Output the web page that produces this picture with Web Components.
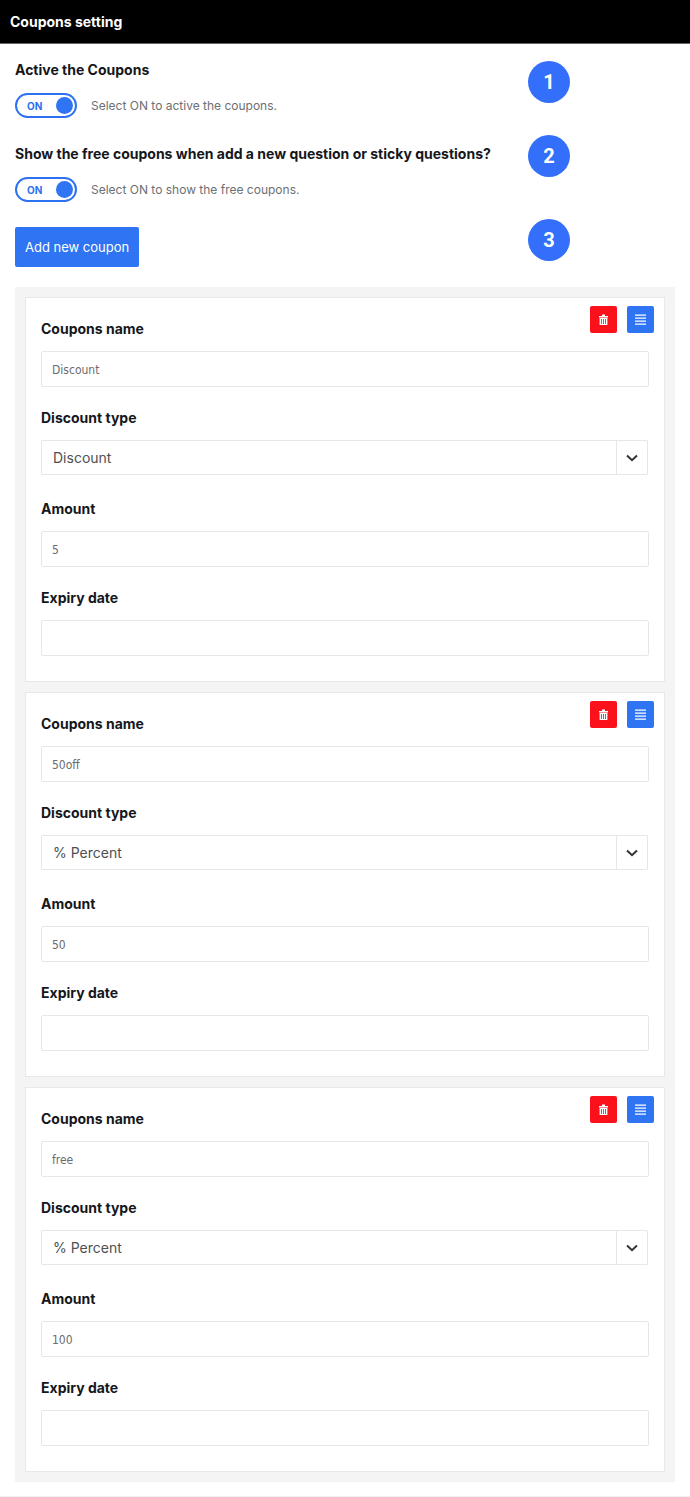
<!DOCTYPE html>
<html lang="en">
<head>
<meta charset="utf-8">
<meta name="viewport" content="width=device-width, initial-scale=1">
<title>Coupons setting</title>
<style>
  body {
    margin: 0;
    background: #fff;
    color: #15171c;
    font-family: Inter, "Liberation Sans", sans-serif;
    font-size: 14px;
    line-height: 20px;
  }
</style>
</head>
<body>
<settings-panel heading="Coupons setting">
  <switch-option label="Active the Coupons" hint="Select ON to active the coupons."></switch-option>
  <switch-option label="Show the free coupons when add a new question or sticky questions?" hint="Select ON to show the free coupons."></switch-option>
  <add-button>Add new coupon</add-button>
  <coupon-list>
    <coupon-card name="Discount" type="Discount" amount="5"></coupon-card>
    <coupon-card name="50off" type="% Percent" amount="50"></coupon-card>
    <coupon-card name="free" type="% Percent" amount="100"></coupon-card>
  </coupon-list>
  <step-badge slot="steps" style="--top: 61px">1</step-badge>
  <step-badge slot="steps" style="--top: 135px">2</step-badge>
  <step-badge slot="steps" style="--top: 219px">3</step-badge>
</settings-panel>

<script>
class SettingsPanel extends HTMLElement {
  constructor() {
    super();
    this.attachShadow({ mode: "open" });
    this.shadowRoot.innerHTML = `
    <style>
    :host {
      display: block;
      position: relative;
      border-bottom: 1px solid #f0f0f0;
    }
    header {
      padding: 12px 10px 11px;
      background: #000;
      border-bottom: 1px solid #666;
    }
    h1 {
      margin: 0;
      color: #fff;
      font-size: 14px;
      font-weight: 700;
    }
    .content {
      padding: 15px 15px 14px;
    }
    </style>
    <header><h1>${this.getAttribute("heading")}</h1></header>
    <div class="content"><slot></slot></div>
    <slot name="steps"></slot>
    `;
  }
}
customElements.define("settings-panel", SettingsPanel);

// Numbered marker that floats over the panel
class StepBadge extends HTMLElement {
  constructor() {
    super();
    this.attachShadow({ mode: "open" });
    this.shadowRoot.innerHTML = `
    <style>
    :host {
      position: absolute;
      top: var(--top);
      right: 120px;
      display: grid;
      place-items: center;
      width: 42px;
      height: 42px;
      border-radius: 50%;
      background: #336ffa;
      color: #fff;
      font: 700 20px/24px Roboto, sans-serif;
    }
    </style>
    <slot></slot>
    `;
  }
}
customElements.define("step-badge", StepBadge);

class SwitchOption extends HTMLElement {
  constructor() {
    super();
    this.attachShadow({ mode: "open" });
    this.shadowRoot.innerHTML = `
    <style>
    :host {
      display: block;
      padding: 1px 0 25px;
    }
    .title {
      display: block;
      margin-bottom: 13px;
      font-weight: 700;
    }
    .row {
      display: flex;
      align-items: center;
      gap: 14px;
    }
    .switch {
      display: grid;
      align-items: center;
      cursor: pointer;
    }
    .switch > * {
      grid-area: 1 / 1;
    }
    input {
      appearance: none;
      display: flex;
      align-items: center;
      box-sizing: border-box;
      width: 62px;
      height: 25px;
      margin: 0;
      padding: 0 2px;
      border: 2px solid #2d70f0;
      border-radius: 13px;
    }
    input::before {
      content: "";
      width: 17px;
      height: 17px;
      border-radius: 50%;
      background: #2f74f3;
    }
    input:checked {
      justify-content: flex-end;
    }
    .state {
      padding-left: 12px;
      color: #2d70f0;
      font-size: 10px;
      font-weight: 700;
      pointer-events: none;
    }
    input:not(:checked) + .state {
      visibility: hidden;
    }
    .hint {
      color: #6d6f72;
      font-size: 12px;
    }
    </style>
    <label class="title" for="toggle">${this.getAttribute("label")}</label>
    <div class="row">
      <div class="switch">
        <input id="toggle" type="checkbox" role="switch" aria-describedby="hint" checked>
        <span class="state">ON</span>
      </div>
      <span class="hint" id="hint">${this.getAttribute("hint")}</span>
    </div>
    `;
  }
}
customElements.define("switch-option", SwitchOption);

class AddButton extends HTMLElement {
  constructor() {
    super();
    this.attachShadow({ mode: "open" });
    this.shadowRoot.innerHTML = `
    <style>
    :host {
      display: block;
      margin-bottom: 20px;
    }
    button {
      display: block;
      padding: 10px;
      border: 0;
      border-radius: 2px;
      background: #2f74f3;
      color: #fff;
      font: inherit;
      font-size: 13px;
      cursor: pointer;
    }
    </style>
    <button type="button"><slot></slot></button>
    `;
  }
}
customElements.define("add-button", AddButton);

class CouponList extends HTMLElement {
  constructor() {
    super();
    this.attachShadow({ mode: "open" });
    this.shadowRoot.innerHTML = `
    <style>
    :host {
      display: flex;
      flex-direction: column;
      gap: 10px;
      padding: 10px;
      background: #f4f4f4;
    }
    </style>
    <slot></slot>
    `;
  }
}
customElements.define("coupon-list", CouponList);

class CouponCard extends HTMLElement {
  constructor() {
    super();
    this.attachShadow({ mode: "open" });
    this.shadowRoot.innerHTML = `
    <style>
    :host {
      display: block;
      position: relative;
      padding: 21px 15px 25px;
      border: 1px solid #e7e8e9;
      background: #fff;
    }
    .actions {
      position: absolute;
      top: 8px;
      right: 10px;
      display: flex;
      gap: 10px;
    }
    </style>
    <div class="actions">
      <icon-button icon="trash" label="Delete coupon"></icon-button>
      <icon-button icon="lines" label="Move coupon"></icon-button>
    </div>
    <text-field label="Coupons name" value="${this.getAttribute("name")}"></text-field>
    <select-field label="Discount type" value="${this.getAttribute("type")}"></select-field>
    <text-field label="Amount" value="${this.getAttribute("amount")}"></text-field>
    <text-field label="Expiry date" value=""></text-field>
    `;
  }
}

const ICONS = {
  trash: `
    <path d="M2 3h9v1.4H2zM5 1.6h3V3H5z"/>
    <path fill-rule="evenodd" d="M2.6 5h7.8v7H2.6zM4.2 6v5h.8V6zM6.1 6v5h.8V6zM8 6v5h.8V6z"/>`,
  lines: `<path d="M1 1.4h11v1.4H1zM1 4.4h11v1.4H1zM1 7.4h11v1.4H1zM1 10.4h11v1.4H1z"/>`
};

class IconButton extends HTMLElement {
  constructor() {
    super();
    this.attachShadow({ mode: "open" });
    this.shadowRoot.innerHTML = `
    <style>
    :host {
      display: block;
    }
    button {
      display: grid;
      place-items: center;
      width: 27px;
      height: 27px;
      padding: 0;
      border: 0;
      border-radius: 2px;
      background: #2f74f3;
      color: #fff;
      cursor: pointer;
    }
    :host([icon="trash"]) button {
      background: #fb111b;
    }
    svg {
      display: block;
      fill: currentColor;
    }
    </style>
    <button type="button" aria-label="${this.getAttribute("label")}">
      <svg width="13" height="13" viewBox="0 0 13 13" aria-hidden="true">${ICONS[this.getAttribute("icon")]}</svg>
    </button>
    `;
  }
}

const FIELD_STYLE = `
    :host {
      display: block;
    }
    :host(:not(:last-child)) {
      margin-bottom: 21px;
    }
    label {
      display: block;
      width: fit-content;
      margin-bottom: 12px;
      font-weight: 700;
    }
`;

class TextField extends HTMLElement {
  constructor() {
    super();
    this.attachShadow({ mode: "open" });
    this.shadowRoot.innerHTML = `
    <style>
    ${FIELD_STYLE}
    input {
      display: block;
      box-sizing: border-box;
      width: 100%;
      height: 36px;
      padding: 2px 10px 0;
      border: 1px solid #e6e7e8;
      border-radius: 2px;
      background: #fff;
      color: #6c6c6c;
      font: 12px/16px "DejaVu Sans Condensed", "Noto Sans", sans-serif;
    }
    </style>
    <label for="field">${this.getAttribute("label")}</label>
    <input id="field" type="text" value="${this.getAttribute("value")}">
    `;
  }
}

class SelectField extends HTMLElement {
  constructor() {
    super();
    this.attachShadow({ mode: "open" });
    const value = this.getAttribute("value");
    const options = ["Discount", "% Percent"]
      .map((name) => `<option${name === value ? " selected" : ""}>${name}</option>`)
      .join("");
    this.shadowRoot.innerHTML = `
    <style>
    ${FIELD_STYLE}
    .box {
      display: grid;
      padding: 0 1px 3px 0;
    }
    .box > * {
      grid-area: 1 / 1;
    }
    select {
      appearance: none;
      width: 100%;
      height: 35px;
      padding: 0 42px 0 11px;
      border: 1px solid #e6e7e8;
      border-radius: 1px;
      background: #fff;
      color: #4f5052;
      font: inherit;
    }
    .arrow {
      justify-self: end;
      display: grid;
      place-items: center;
      width: 30px;
      margin: 1px;
      border-left: 1px solid #e6e7e8;
      pointer-events: none;
    }
    svg {
      fill: none;
      stroke: #333;
      stroke-width: 2;
    }
    </style>
    <label for="field">${this.getAttribute("label")}</label>
    <div class="box">
      <select id="field">${options}</select>
      <span class="arrow">
        <svg width="12" height="8" viewBox="0 0 12 8" aria-hidden="true"><path d="M1 1.5l5 4.7 5-4.7"/></svg>
      </span>
    </div>
    `;
  }
}

customElements.define("icon-button", IconButton);
customElements.define("text-field", TextField);
customElements.define("select-field", SelectField);
customElements.define("coupon-card", CouponCard);
</script>
</body>
</html>
